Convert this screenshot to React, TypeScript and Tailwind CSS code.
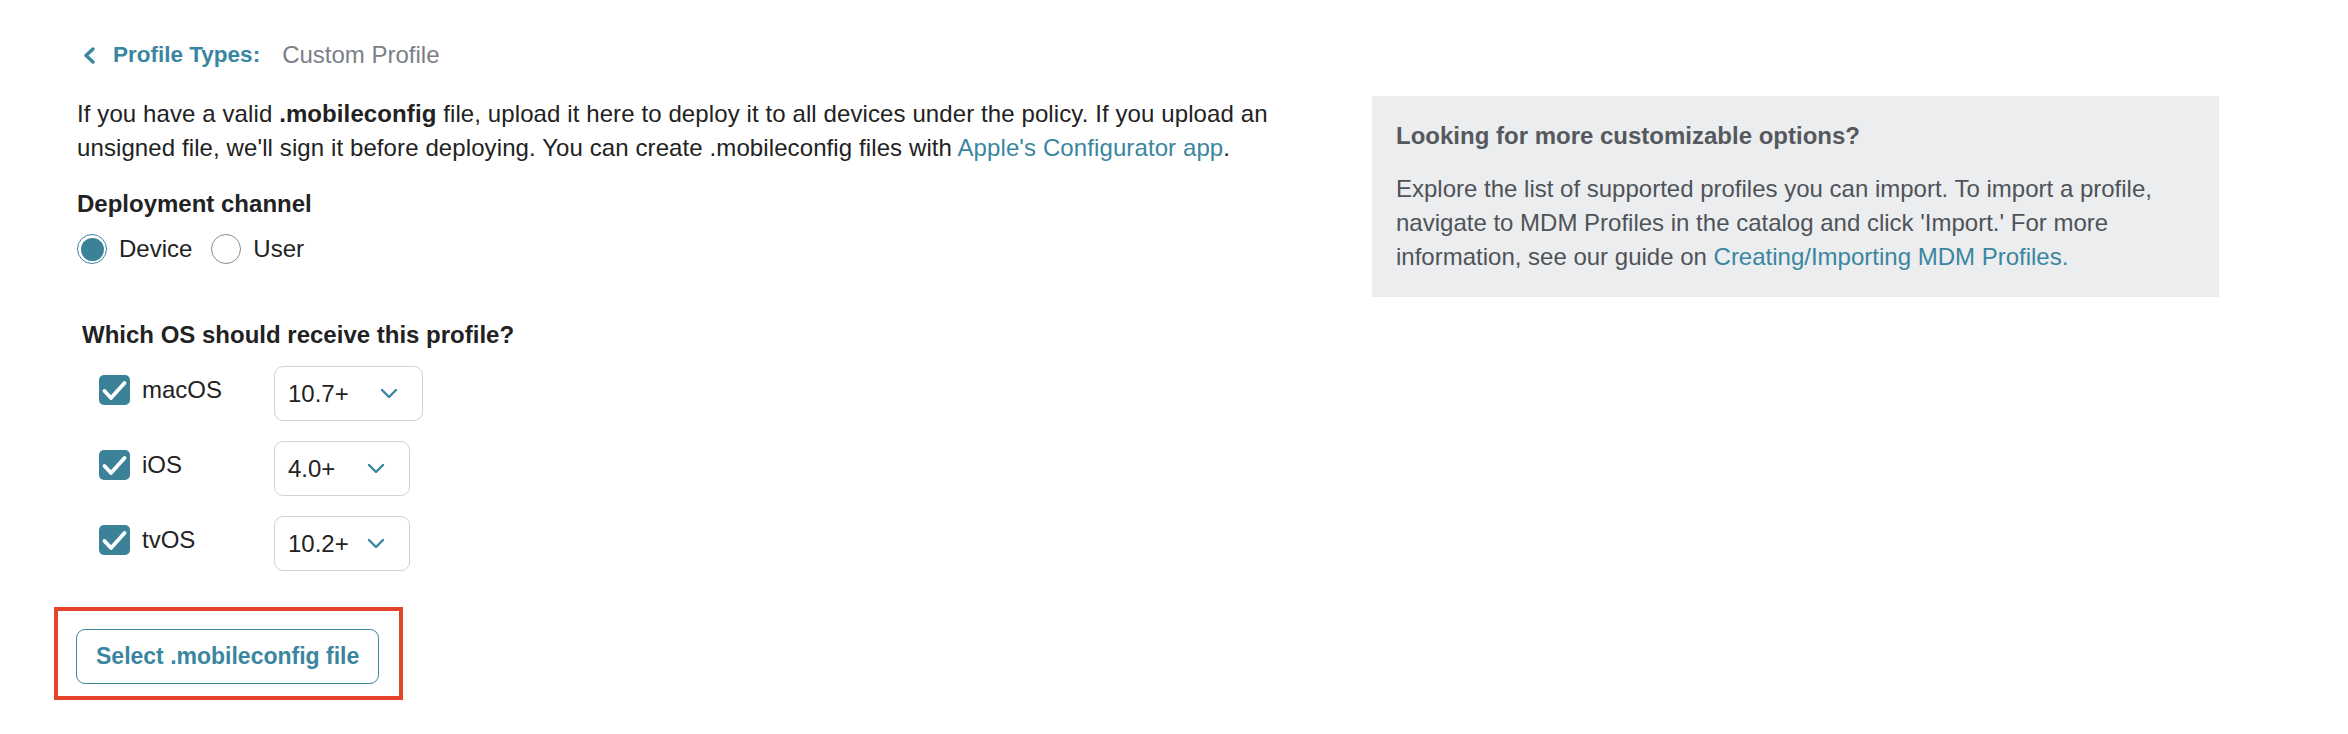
import React from 'react';

const teal = 'text-[#3a86a0]';

const ChevronLeft = () => (
  <svg width="14" height="17" viewBox="0 0 14 17" fill="none" aria-hidden="true">
    <polyline
      points="11,2 4,8.5 11,15"
      stroke="#3a86a0"
      strokeWidth="3.4"
      strokeLinecap="round"
      strokeLinejoin="round"
    />
  </svg>
);

const ChevronDown = () => (
  <svg width="18" height="11" viewBox="0 0 18 11" fill="none" aria-hidden="true">
    <polyline
      points="2,2 9,9 16,2"
      stroke="#3a86a0"
      strokeWidth="2.4"
      strokeLinecap="round"
      strokeLinejoin="round"
    />
  </svg>
);

const Checkbox = () => (
  <span className="flex h-[30px] w-[31px] shrink-0 items-center justify-center rounded-[5px] bg-[#3b8299]">
    <svg width="31" height="30" viewBox="0 0 31 30" fill="none" aria-hidden="true">
      <polyline
        points="5.5,16 12,23 25.5,8"
        stroke="#ffffff"
        strokeWidth="3.8"
        strokeLinecap="round"
        strokeLinejoin="round"
      />
    </svg>
  </span>
);

interface RadioProps {
  label: string;
  checked?: boolean;
}

const Radio: React.FC<RadioProps> = ({ label, checked = false }) => (
  <label className="flex items-center gap-[12px]">
    {checked ? (
      <span className="flex h-[30px] w-[30px] items-center justify-center rounded-full border border-[#3a86a0] bg-white">
        <span className="h-[23px] w-[23px] rounded-full bg-[#3b8299]" />
      </span>
    ) : (
      <span className="h-[30px] w-[30px] rounded-full border border-[#8c8c8c] bg-white" />
    )}
    <span className="text-[24px] leading-[34px] text-[#222222]">{label}</span>
  </label>
);

interface OsRowProps {
  name: string;
  version: string;
  width: string;
}

const OsRow: React.FC<OsRowProps> = ({ name, version, width }) => (
  <div className="flex items-start">
    <div className="mt-[9px] flex w-[175px] items-center gap-[12px]">
      <Checkbox />
      <span className="text-[24px] leading-[30px] text-[#222222]">{name}</span>
    </div>
    <div
      className={`flex h-[55px] ${width} items-center justify-between rounded-[9px] border border-[#d2d2d4] bg-white pl-[13px] pr-[24px]`}
    >
      <span className="text-[24px] leading-[34px] text-[#222222]">{version}</span>
      <ChevronDown />
    </div>
  </div>
);

export default function App() {
  return (
    <div
      className="flex h-[734px] w-full bg-white text-[#222222]"
      style={{ fontFamily: '"Liberation Sans", Arial, sans-serif' }}
    >
      <div className="w-[1295px] shrink-0 pl-[77px] pt-[38px]">
        <div className="flex items-center pl-[5px] leading-[34px]">
          <ChevronLeft />
          <span className={`ml-[17px] text-[22.5px] font-bold ${teal}`}>Profile Types:</span>
          <span className="ml-[22px] text-[24px] text-[#7b8087]">Custom Profile</span>
        </div>

        <p className="mt-[25px] w-[1240px] text-[24px] leading-[34px] tracking-[0.1px]">
          If you have a valid <b>.mobileconfig</b> file, upload it here to deploy it to all devices under the
          policy. If you upload an unsigned file, we'll sign it before deploying. You can create .mobileconfig
          files with <a className={teal}>Apple's Configurator app</a>.
        </p>

        <h3 className="mt-[22px] text-[24px] font-bold leading-[34px]">Deployment channel</h3>
        <div className="mt-[11px] flex items-center gap-[19px]">
          <Radio label="Device" checked />
          <Radio label="User" />
        </div>

        <h3 className="ml-[5px] mt-[52px] text-[24px] font-bold leading-[34px]">
          Which OS should receive this profile?
        </h3>
        <div className="ml-[22px] mt-[14px] flex flex-col gap-[20px]">
          <OsRow name="macOS" version="10.7+" width="w-[149px]" />
          <OsRow name="iOS" version="4.0+" width="w-[136px]" />
          <OsRow name="tvOS" version="10.2+" width="w-[136px]" />
        </div>

        <div className="-ml-[23px] mt-[36px] inline-block border-4 border-[#e6432b] pb-[12px] pl-[18px] pr-[20px] pt-[18px]">
          <button
            className={`h-[55px] rounded-[9px] border border-[#3f89a1] bg-white px-[19px] text-[23px] font-bold ${teal}`}
          >
            Select .mobileconfig file
          </button>
        </div>
      </div>

      <div className="ml-[77px] mt-[96px] h-fit w-[847px] bg-[#ecedef] pb-[23px] pl-[24px] pr-[24px] pt-[23px]">
        <h4 className="text-[24px] font-bold leading-[34px] text-[#55595e]">
          Looking for more customizable options?
        </h4>
        <p className="mt-[19px] text-[24px] leading-[34px] text-[#4f5358]">
          Explore the list of supported profiles you can import. To import a profile, navigate to MDM Profiles
          in the catalog and click 'Import.' For more information, see our guide on{' '}
          <a className={teal}>Creating/Importing MDM Profiles.</a>
        </p>
      </div>
    </div>
  );
}
